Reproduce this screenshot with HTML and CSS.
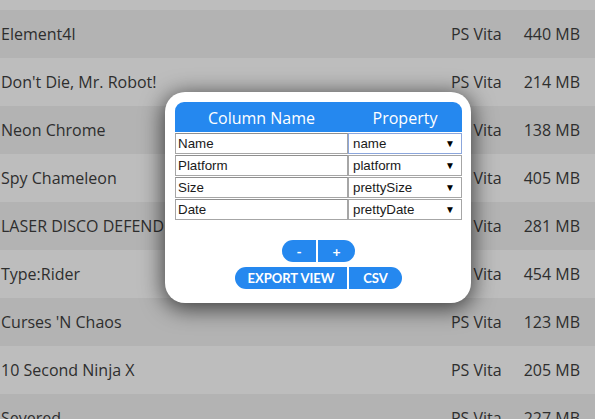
FILE: index.html
```html
<!DOCTYPE html>
<html>
<head>
<meta charset="utf-8">
<link rel="stylesheet" href="styles.css">
</head>
<body>
<div class="list">
  <div class="row light partial"></div>
  <div class="row dark"><span class="name">Element4l</span><span class="platform">PS Vita</span><span class="size">440 MB</span></div>
  <div class="row light"><span class="name">Don't Die, Mr. Robot!</span><span class="platform">PS Vita</span><span class="size">214 MB</span></div>
  <div class="row dark"><span class="name">Neon Chrome</span><span class="platform">PS Vita</span><span class="size">138 MB</span></div>
  <div class="row light"><span class="name">Spy Chameleon</span><span class="platform">PS Vita</span><span class="size">405 MB</span></div>
  <div class="row dark"><span class="name">LASER DISCO DEFENDERS</span><span class="platform">PS Vita</span><span class="size">281 MB</span></div>
  <div class="row light"><span class="name">Type:Rider</span><span class="platform">PS Vita</span><span class="size">454 MB</span></div>
  <div class="row dark"><span class="name">Curses 'N Chaos</span><span class="platform">PS Vita</span><span class="size">123 MB</span></div>
  <div class="row light"><span class="name">10 Second Ninja X</span><span class="platform">PS Vita</span><span class="size">205 MB</span></div>
  <div class="row dark"><span class="name">Severed</span><span class="platform">PS Vita</span><span class="size">227 MB</span></div>
</div>

<div class="modal">
  <div class="table">
    <div class="head">
      <div class="th">Column Name</div>
      <div class="th">Property</div>
    </div>
    <div class="tr">
      <div class="field">Name</div>
      <div class="select focused"><span>name</span><span class="arrow">▼</span></div>
    </div>
    <div class="tr">
      <div class="field">Platform</div>
      <div class="select"><span>platform</span><span class="arrow">▼</span></div>
    </div>
    <div class="tr">
      <div class="field">Size</div>
      <div class="select"><span>prettySize</span><span class="arrow">▼</span></div>
    </div>
    <div class="tr">
      <div class="field">Date</div>
      <div class="select"><span>prettyDate</span><span class="arrow">▼</span></div>
    </div>
  </div>
  <div class="btn-group pm">
    <button class="btn minus">-</button>
    <button class="btn plus">+</button>
  </div>
  <div class="btn-group exp">
    <button class="btn export">EXPORT VIEW</button>
    <button class="btn csv">CSV</button>
  </div>
</div>
</body>
</html>
```

FILE: styles.css
```css
* { box-sizing: border-box; }
html, body { margin: 0; padding: 0; }
body {
  width: 595px;
  height: 419px;
  overflow: hidden;
  font-family: "Open Sans", "Liberation Sans", sans-serif;
  background: #b3b3b3;
  position: relative;
}
.list { display: flex; flex-direction: column; }
.row {
  height: 48px;
  flex: none;
  display: flex;
  align-items: center;
  padding: 0 15px 1px 1px;
  font-size: 16px;
  color: #2e2e2e;
}
.row.partial { height: 10px; }
.light { background: #bdbdbd; }
.dark { background: #b3b3b3; }
.name { flex: 1; white-space: nowrap; }
.platform { margin-right: 22px; }
.size { min-width: 56px; text-align: right; }

.modal {
  position: absolute;
  left: 165px;
  top: 92px;
  width: 306px;
  background: #fff;
  border-radius: 20px;
  padding: 10px 9px 14px 10px;
  box-shadow: 0 4px 22px 2px rgba(0,0,0,0.65);
  display: flex;
  flex-direction: column;
  align-items: center;
}
.table { width: 287px; }
.head {
  display: grid;
  grid-template-columns: 173px 114px;
  height: 30px;
  background: #2588ef;
  border-radius: 9px 9px 0 0;
  color: #fff;
  font-size: 16px;
  font-weight: 500;
}
.th { display: flex; align-items: center; justify-content: center; padding-top: 1px; }
.tr {
  display: grid;
  grid-template-columns: 173px 114px;
  height: 21px;
  margin-top: 1px;
  font-family: "Liberation Sans", Arial, sans-serif;
  font-size: 13.33px;
  color: #1a1a1a;
}
.field {
  border: 1px solid #a6a6a6;
  border-top-color: #8f8f8f;
  padding: 0 2px;
  display: flex;
  align-items: center;
  background: #fff;
}
.select {
  border: 1px solid #a6a6a6;
  padding: 0 6px 0 4px;
  display: flex;
  align-items: center;
  justify-content: space-between;
  background: #fff;
}
.select.focused { border-color: #8ba6dc; }
.arrow { font-size: 10px; color: #000; }

.btn-group { display: flex; gap: 2px; }
.pm { margin-top: 20px; }
.exp { margin-top: 5px; }
.btn {
  border: 0;
  margin: 0;
  background: #2588ef;
  color: #fff;
  font-family: Lato, "Open Sans", sans-serif;
  font-weight: 700;
  font-size: 13px;
  height: 22px;
  padding: 0;
  display: flex;
  align-items: center;
  justify-content: center;
}
.minus { width: 34px; border-radius: 11px 0 0 11px; font-size: 14px; }
.plus { width: 37px; border-radius: 0 11px 11px 0; font-size: 14px; }
.export { width: 112px; border-radius: 11px 0 0 11px; }
.csv { width: 53px; border-radius: 0 11px 11px 0; }
```
